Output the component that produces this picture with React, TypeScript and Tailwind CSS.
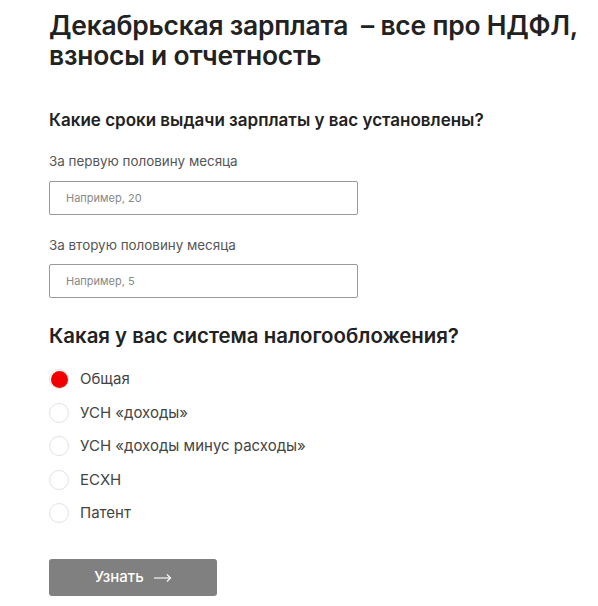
import { useState } from "react";

const options = [
  "Общая",
  "УСН «доходы»",
  "УСН «доходы минус расходы»",
  "ЕСХН",
  "Патент",
];

export default function App() {
  const [tax, setTax] = useState(0);
  const [first, setFirst] = useState("");
  const [second, setSecond] = useState("");

  return (
    <div
      className="min-h-screen w-full bg-white pl-[49px] pr-4 pt-[10px] text-[#222]"
      style={{ fontFamily: "Inter, 'Open Sans', Arial, sans-serif" }}
    >
      {/* Title */}
      <h1 className="text-[26.4px] font-semibold leading-[30px] tracking-[-0.2px] text-[#222]">
        Декабрьская зарплата&nbsp; – все про НДФЛ, взносы и отчетность
      </h1>

      {/* Salary dates */}
      <h2 className="mt-[38px] text-[17px] font-semibold leading-[24px] text-[#222]">
        Какие сроки выдачи зарплаты у вас установлены?
      </h2>

      <label className="mt-[20px] block text-[13.4px] leading-[18px] text-[#555]">
        За первую половину месяца
      </label>
      <input
        value={first}
        onChange={(e) => setFirst(e.target.value)}
        placeholder="Например, 20"
        className="mt-[11px] block h-[34px] w-[309px] rounded-[2px] border border-[#9a9a9a] px-[16px] text-[11px] text-[#333] placeholder-[#888] focus:outline-none"
      />

      <label className="mt-[21px] block text-[13.4px] leading-[18px] text-[#555]">
        За вторую половину месяца
      </label>
      <input
        value={second}
        onChange={(e) => setSecond(e.target.value)}
        placeholder="Например, 5"
        className="mt-[10px] block h-[34px] w-[309px] rounded-[2px] border border-[#9a9a9a] px-[16px] text-[11px] text-[#333] placeholder-[#888] focus:outline-none"
      />

      {/* Tax system */}
      <h2 className="mt-[24px] text-[20.4px] font-semibold leading-[28px] text-[#222]">
        Какая у вас система налогообложения?
      </h2>

      <div className="mt-[19px] flex flex-col gap-[13.5px]">
        {options.map((label, i) => (
          <button
            key={label}
            type="button"
            onClick={() => setTax(i)}
            className="flex items-center gap-[11px] text-left"
          >
            <span className="flex h-[20px] w-[20px] items-center justify-center rounded-full border border-[#e2e2e2] bg-white">
              {tax === i && (
                <span className="h-[17px] w-[17px] rounded-full bg-[#f00000]" />
              )}
            </span>
            <span className="text-[15px] leading-[20px] text-[#444]">{label}</span>
          </button>
        ))}
      </div>

      <button
        type="button"
        className="mt-[36px] flex h-[37px] w-[168px] items-center justify-center gap-[10px] rounded-[3px] bg-[#808080] text-[15px] font-medium text-white"
      >
        Узнать
        <svg width="18" height="10" viewBox="0 0 18 10" fill="none" stroke="currentColor" strokeWidth="1.1">
          <path d="M0 5h17" />
          <path d="M13 1.5l3.5 3.5-3.5 3.5" />
        </svg>
      </button>
    </div>
  );
}
